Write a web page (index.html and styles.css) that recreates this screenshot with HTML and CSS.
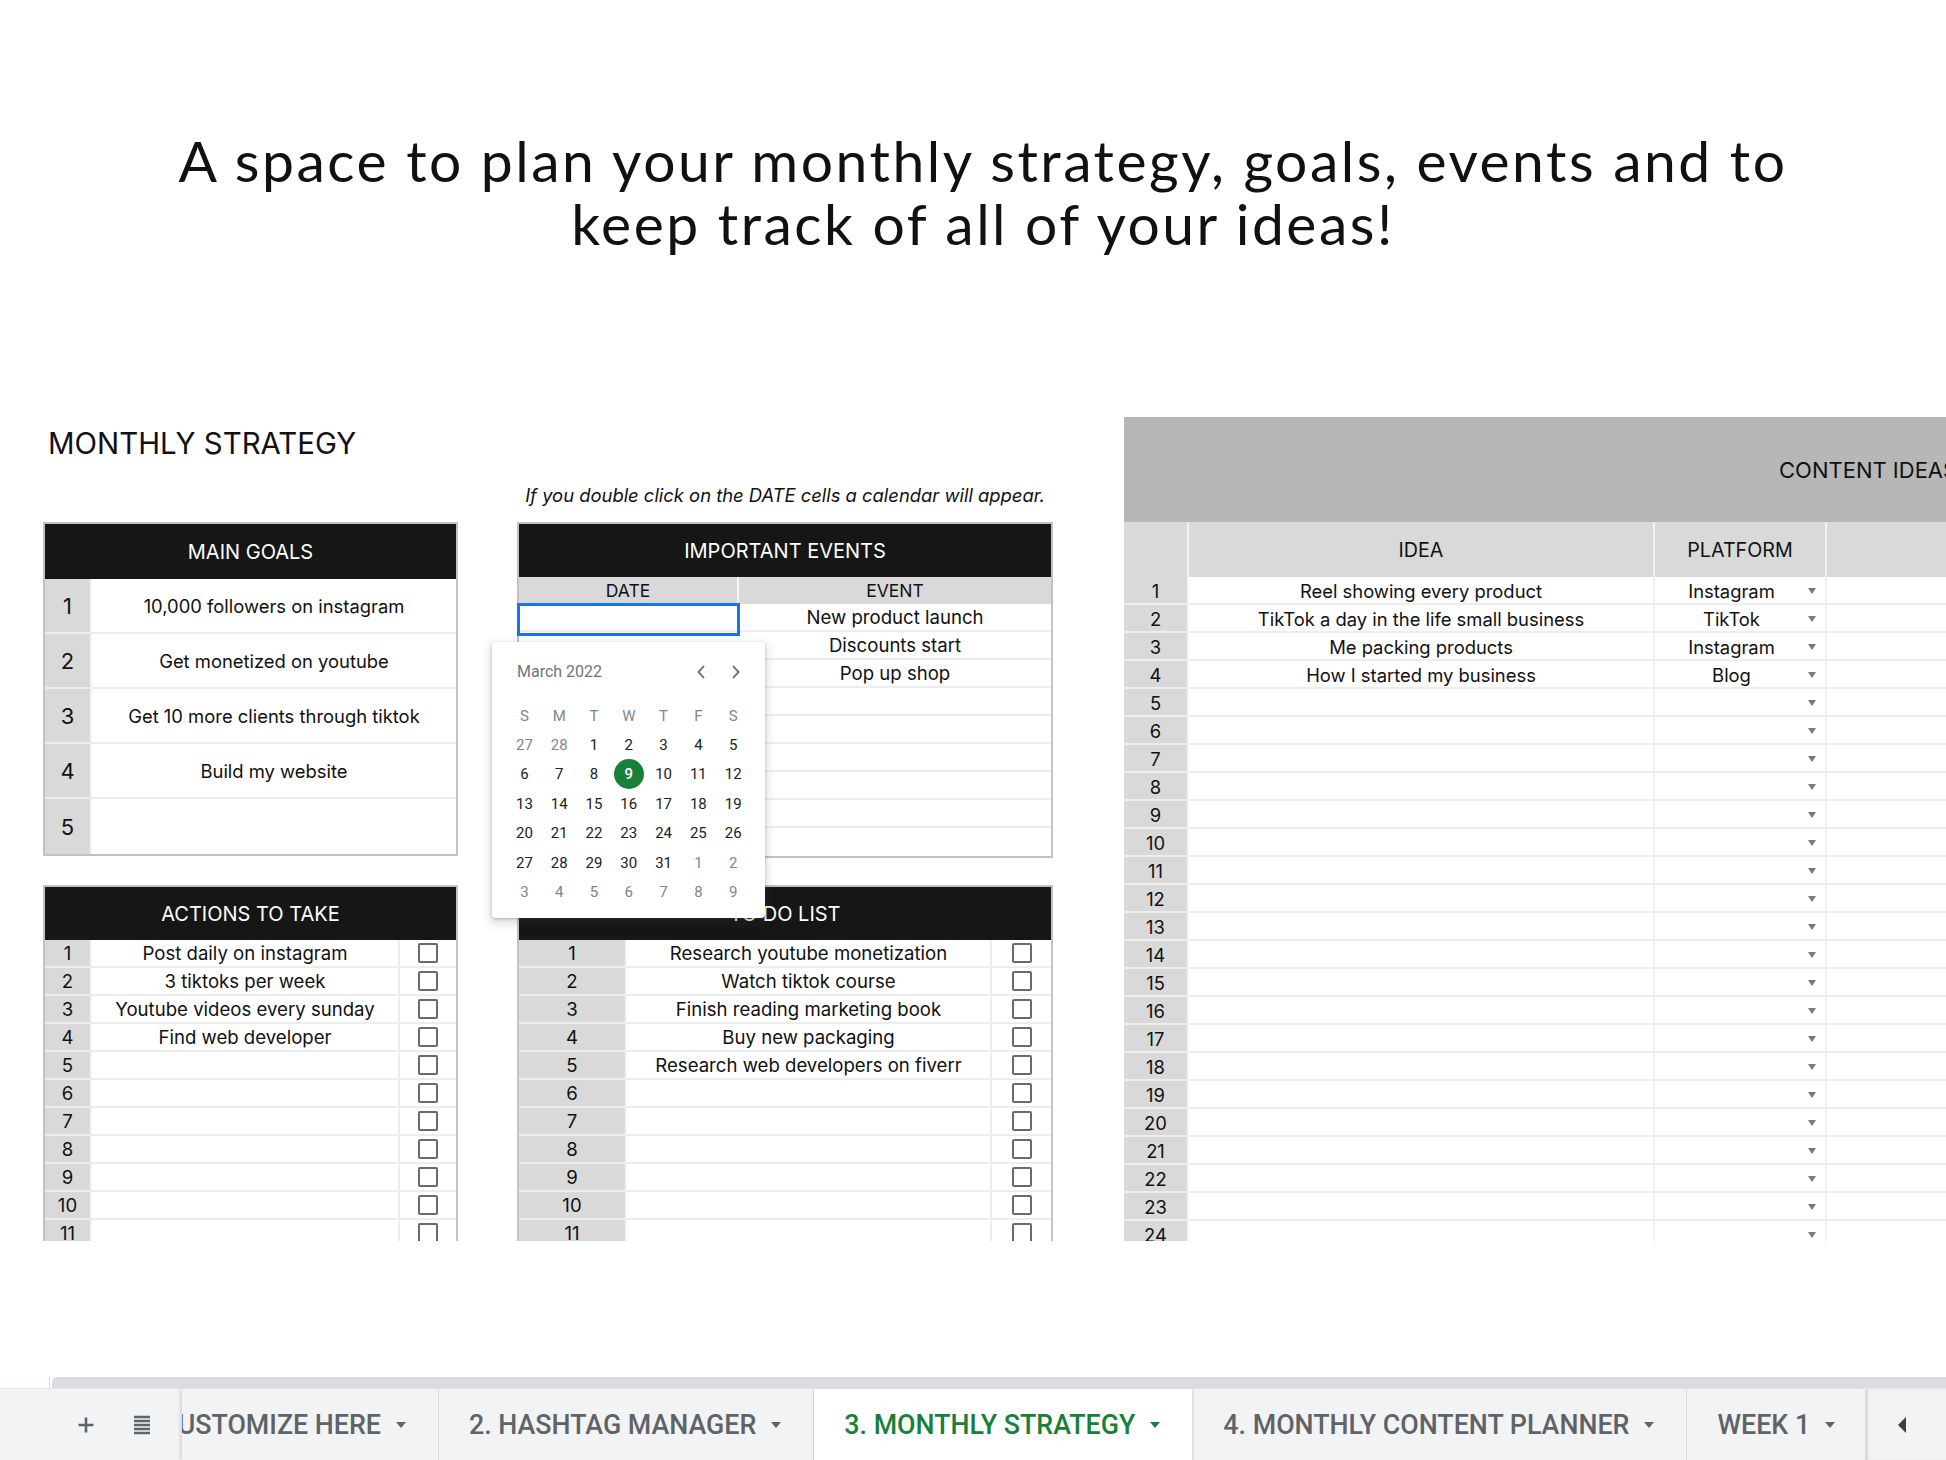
FILE: index.html
```html
<!DOCTYPE html>
<html lang="en">
<head>
<meta charset="utf-8">
<title>Monthly Strategy</title>
<link rel="stylesheet" href="styles.css">
</head>
<body>
<h1 class="title">A space to plan your monthly strategy, goals, events and to<br>keep track of all of your ideas!</h1>

<main class="main">
  <section class="col-left">
    <h2 class="strategy-head">MONTHLY STRATEGY</h2>

    <div class="tbl goals">
      <div class="tbl-head">MAIN GOALS</div>
      <div class="row g-row"><span class="num">1</span><span class="txt">10,000 followers on instagram</span></div>
      <div class="row g-row"><span class="num">2</span><span class="txt">Get monetized on youtube</span></div>
      <div class="row g-row"><span class="num">3</span><span class="txt">Get 10 more clients through tiktok</span></div>
      <div class="row g-row"><span class="num">4</span><span class="txt">Build my website</span></div>
      <div class="row g-row"><span class="num">5</span><span class="txt"></span></div>
    </div>

    <div class="tbl actions">
      <div class="tbl-head">ACTIONS TO TAKE</div>
      <div class="row a-row"><span class="num">1</span><span class="txt">Post daily on instagram</span><span class="chk"><i class="box"></i></span></div>
      <div class="row a-row"><span class="num">2</span><span class="txt">3 tiktoks per week</span><span class="chk"><i class="box"></i></span></div>
      <div class="row a-row"><span class="num">3</span><span class="txt">Youtube videos every sunday</span><span class="chk"><i class="box"></i></span></div>
      <div class="row a-row"><span class="num">4</span><span class="txt">Find web developer</span><span class="chk"><i class="box"></i></span></div>
      <div class="row a-row"><span class="num">5</span><span class="txt"></span><span class="chk"><i class="box"></i></span></div>
      <div class="row a-row"><span class="num">6</span><span class="txt"></span><span class="chk"><i class="box"></i></span></div>
      <div class="row a-row"><span class="num">7</span><span class="txt"></span><span class="chk"><i class="box"></i></span></div>
      <div class="row a-row"><span class="num">8</span><span class="txt"></span><span class="chk"><i class="box"></i></span></div>
      <div class="row a-row"><span class="num">9</span><span class="txt"></span><span class="chk"><i class="box"></i></span></div>
      <div class="row a-row"><span class="num">10</span><span class="txt"></span><span class="chk"><i class="box"></i></span></div>
      <div class="row a-row"><span class="num">11</span><span class="txt"></span><span class="chk"><i class="box"></i></span></div>
    </div>
  </section>

  <section class="col-mid">
    <p class="instr">If you double click on the DATE cells a calendar will appear.</p>

    <div class="tbl events">
      <div class="tbl-head">IMPORTANT EVENTS</div>
      <div class="e-sub"><span>DATE</span><span>EVENT</span></div>
      <div class="row e-row"><span class="date selected"></span><span class="txt">New product launch</span></div>
      <div class="row e-row"><span class="date"></span><span class="txt">Discounts start</span></div>
      <div class="row e-row"><span class="date"></span><span class="txt">Pop up shop</span></div>
      <div class="row e-row"><span class="date"></span><span class="txt"></span></div>
      <div class="row e-row"><span class="date"></span><span class="txt"></span></div>
      <div class="row e-row"><span class="date"></span><span class="txt"></span></div>
      <div class="row e-row"><span class="date"></span><span class="txt"></span></div>
      <div class="row e-row"><span class="date"></span><span class="txt"></span></div>
      <div class="row e-row"><span class="date"></span><span class="txt"></span></div>
    </div>

    <div class="tbl todo">
      <div class="tbl-head">TO DO LIST</div>
      <div class="row t-row"><span class="num">1</span><span class="txt">Research youtube monetization</span><span class="chk"><i class="box"></i></span></div>
      <div class="row t-row"><span class="num">2</span><span class="txt">Watch tiktok course</span><span class="chk"><i class="box"></i></span></div>
      <div class="row t-row"><span class="num">3</span><span class="txt">Finish reading marketing book</span><span class="chk"><i class="box"></i></span></div>
      <div class="row t-row"><span class="num">4</span><span class="txt">Buy new packaging</span><span class="chk"><i class="box"></i></span></div>
      <div class="row t-row"><span class="num">5</span><span class="txt">Research web developers on fiverr</span><span class="chk"><i class="box"></i></span></div>
      <div class="row t-row"><span class="num">6</span><span class="txt"></span><span class="chk"><i class="box"></i></span></div>
      <div class="row t-row"><span class="num">7</span><span class="txt"></span><span class="chk"><i class="box"></i></span></div>
      <div class="row t-row"><span class="num">8</span><span class="txt"></span><span class="chk"><i class="box"></i></span></div>
      <div class="row t-row"><span class="num">9</span><span class="txt"></span><span class="chk"><i class="box"></i></span></div>
      <div class="row t-row"><span class="num">10</span><span class="txt"></span><span class="chk"><i class="box"></i></span></div>
      <div class="row t-row"><span class="num">11</span><span class="txt"></span><span class="chk"><i class="box"></i></span></div>
    </div>

    <div class="calendar">
      <div class="cal-head">
        <span class="cal-month">March 2022</span>
        <span class="cal-nav">
          <svg width="10" height="16" viewBox="0 0 10 16"><path d="M8 2 L2.5 8 L8 14" fill="none" stroke="#5f6368" stroke-width="1.8"/></svg>
          <svg width="10" height="16" viewBox="0 0 10 16"><path d="M2 2 L7.5 8 L2 14" fill="none" stroke="#5f6368" stroke-width="1.8"/></svg>
        </span>
      </div>
      <div class="cal-grid">
        <span class="dow">S</span><span class="dow">M</span><span class="dow">T</span><span class="dow">W</span><span class="dow">T</span><span class="dow">F</span><span class="dow">S</span>
        <span class="out">27</span><span class="out">28</span><span>1</span><span>2</span><span>3</span><span>4</span><span>5</span>
        <span>6</span><span>7</span><span>8</span><span><b class="today">9</b></span><span>10</span><span>11</span><span>12</span>
        <span>13</span><span>14</span><span>15</span><span>16</span><span>17</span><span>18</span><span>19</span>
        <span>20</span><span>21</span><span>22</span><span>23</span><span>24</span><span>25</span><span>26</span>
        <span>27</span><span>28</span><span>29</span><span>30</span><span>31</span><span class="out">1</span><span class="out">2</span>
        <span class="out">3</span><span class="out">4</span><span class="out">5</span><span class="out">6</span><span class="out">7</span><span class="out">8</span><span class="out">9</span>
      </div>
    </div>
  </section>

  <section class="col-right">
    <div class="ci-title">CONTENT IDEAS</div>
    <div class="ci-head"><span></span><span>IDEA</span><span>PLATFORM</span><span></span></div>
    <div class="ci-row"><span class="num">1</span><span class="txt">Reel showing every product</span><span class="plat"><span class="pt">Instagram</span><i class="dd"></i></span><span></span></div>
    <div class="ci-row"><span class="num">2</span><span class="txt">TikTok a day in the life small business</span><span class="plat"><span class="pt">TikTok</span><i class="dd"></i></span><span></span></div>
    <div class="ci-row"><span class="num">3</span><span class="txt">Me packing products</span><span class="plat"><span class="pt">Instagram</span><i class="dd"></i></span><span></span></div>
    <div class="ci-row"><span class="num">4</span><span class="txt">How I started my business</span><span class="plat"><span class="pt">Blog</span><i class="dd"></i></span><span></span></div>
    <div class="ci-row"><span class="num">5</span><span class="txt"></span><span class="plat"><span class="pt"></span><i class="dd"></i></span><span></span></div>
    <div class="ci-row"><span class="num">6</span><span class="txt"></span><span class="plat"><span class="pt"></span><i class="dd"></i></span><span></span></div>
    <div class="ci-row"><span class="num">7</span><span class="txt"></span><span class="plat"><span class="pt"></span><i class="dd"></i></span><span></span></div>
    <div class="ci-row"><span class="num">8</span><span class="txt"></span><span class="plat"><span class="pt"></span><i class="dd"></i></span><span></span></div>
    <div class="ci-row"><span class="num">9</span><span class="txt"></span><span class="plat"><span class="pt"></span><i class="dd"></i></span><span></span></div>
    <div class="ci-row"><span class="num">10</span><span class="txt"></span><span class="plat"><span class="pt"></span><i class="dd"></i></span><span></span></div>
    <div class="ci-row"><span class="num">11</span><span class="txt"></span><span class="plat"><span class="pt"></span><i class="dd"></i></span><span></span></div>
    <div class="ci-row"><span class="num">12</span><span class="txt"></span><span class="plat"><span class="pt"></span><i class="dd"></i></span><span></span></div>
    <div class="ci-row"><span class="num">13</span><span class="txt"></span><span class="plat"><span class="pt"></span><i class="dd"></i></span><span></span></div>
    <div class="ci-row"><span class="num">14</span><span class="txt"></span><span class="plat"><span class="pt"></span><i class="dd"></i></span><span></span></div>
    <div class="ci-row"><span class="num">15</span><span class="txt"></span><span class="plat"><span class="pt"></span><i class="dd"></i></span><span></span></div>
    <div class="ci-row"><span class="num">16</span><span class="txt"></span><span class="plat"><span class="pt"></span><i class="dd"></i></span><span></span></div>
    <div class="ci-row"><span class="num">17</span><span class="txt"></span><span class="plat"><span class="pt"></span><i class="dd"></i></span><span></span></div>
    <div class="ci-row"><span class="num">18</span><span class="txt"></span><span class="plat"><span class="pt"></span><i class="dd"></i></span><span></span></div>
    <div class="ci-row"><span class="num">19</span><span class="txt"></span><span class="plat"><span class="pt"></span><i class="dd"></i></span><span></span></div>
    <div class="ci-row"><span class="num">20</span><span class="txt"></span><span class="plat"><span class="pt"></span><i class="dd"></i></span><span></span></div>
    <div class="ci-row"><span class="num">21</span><span class="txt"></span><span class="plat"><span class="pt"></span><i class="dd"></i></span><span></span></div>
    <div class="ci-row"><span class="num">22</span><span class="txt"></span><span class="plat"><span class="pt"></span><i class="dd"></i></span><span></span></div>
    <div class="ci-row"><span class="num">23</span><span class="txt"></span><span class="plat"><span class="pt"></span><i class="dd"></i></span><span></span></div>
    <div class="ci-row"><span class="num">24</span><span class="txt"></span><span class="plat"><span class="pt"></span><i class="dd"></i></span><span></span></div>
  </section>
</main>

<div class="spacer"></div>

<footer class="sheetbar">
  <div class="scroll-row"><span class="scroll-left"></span><span class="scroll-track"></span></div>
  <div class="tabbar">
    <div class="tools">
      <svg class="ic-plus" width="18" height="18" viewBox="0 0 18 18"><path d="M9 1.5 V16.5 M1.5 9 H16.5" stroke="#5f6368" stroke-width="2.6"/></svg>
      <svg class="ic-list" width="18" height="20" viewBox="0 0 18 20"><path d="M1 2 H17 M1 6 H17 M1 10 H17 M1 14 H17 M1 18 H17" stroke="#5f6368" stroke-width="2.4"/></svg>
    </div>
    <div class="tabs">
      <div class="tab-clip"><div class="tab">1. CUSTOMIZE HERE<i class="tarr"></i></div></div>
      <div class="tab">2. HASHTAG MANAGER<i class="tarr"></i></div>
      <div class="tab active">3. MONTHLY STRATEGY<i class="tarr"></i></div>
      <div class="tab">4. MONTHLY CONTENT PLANNER<i class="tarr"></i></div>
      <div class="tab">WEEK 1<i class="tarr"></i></div>
    </div>
    <div class="tab-nav">
      <svg width="10" height="18" viewBox="0 0 10 18"><path d="M9 1 L1 9 L9 17 Z" fill="#3c4043"/></svg>
    </div>
  </div>
</footer>
</body>
</html>
```

FILE: styles.css
```css
:root {
  --f: "Inter", "Noto Sans", "Liberation Sans", sans-serif;
  --num: #d9d9d9;
  --line: #ededed;
}

* { box-sizing: border-box; }

body {
  margin: 0;
  width: 1946px;
  height: 1460px;
  overflow: hidden;
  background: #fff;
  color: #111;
  font-family: var(--f);
  display: flex;
  flex-direction: column;
}

.title {
  margin: 0;
  height: 417px;
  flex: none;
  padding: 129px 0 0 20px;
  text-align: center;
  font-family: "Lato", "Liberation Sans", sans-serif;
  font-weight: 400;
  font-size: 57px;
  line-height: 63px;
  letter-spacing: 2.5px;
  color: #111;
}

.main {
  flex: none;
  height: 824px;
  overflow: hidden;
  display: flex;
  padding-left: 43px;
}

.col-left { width: 415px; flex: none; }
.col-mid { width: 536px; flex: none; margin-left: 59px; position: relative; }
.col-right { width: 900px; flex: none; margin-left: 71px; }

.strategy-head {
  margin: 0;
  height: 105px;
  padding: 7px 0 0 5px;
  font-weight: 400;
  font-size: 29.4px;
  line-height: 40px;
  color: #111;
}

.instr {
  margin: 0;
  height: 105px;
  padding: 66px 0 0 0;
  text-align: center;
  font-style: italic;
  font-size: 18.4px;
  line-height: 24px;
  color: #111;
  white-space: nowrap;
}

/* tables */
.tbl {
  border: 2px solid #c2c2c2;
  background: #fff;
}
.tbl-head {
  height: 53px;
  background: #161616;
  color: #fff;
  display: flex;
  align-items: center;
  justify-content: center;
  font-size: 20px;
}
.goals .tbl-head { height: 55px; }

.row {
  display: grid;
  height: 28px;
  border-bottom: 2px solid var(--line);
  font-size: 18.6px;
  color: #111;
}
.row > span {
  display: flex;
  align-items: center;
  justify-content: center;
  white-space: nowrap;
}
.num {
  background: var(--num);
  border-right: 2px solid #f4f4f4;
}
.chk { border-left: 2px solid var(--line); }
.box {
  width: 20px;
  height: 20px;
  border: 2px solid #6a6a6a;
  border-radius: 2px;
}

.g-row { grid-template-columns: 47px 1fr; height: 55px; font-size: 18.4px; }
.g-row:last-child { border-bottom: 0; }
.g-row .num { font-size: 22px; }

.actions { margin-top: 29px; }
.a-row { grid-template-columns: 47px 1fr 58px; }

.todo { margin-top: 27px; }
.t-row { grid-template-columns: 108px 1fr 61px; }

.e-sub {
  display: grid;
  grid-template-columns: 220px 1fr;
  height: 27px;
  background: var(--num);
  font-size: 17.5px;
}
.e-sub span {
  display: flex;
  align-items: center;
  justify-content: center;
}
.e-sub span:first-child { border-right: 2px solid #f4f4f4; }
.e-row { grid-template-columns: 220px 1fr; }
.e-row:last-child { border-bottom: 0; }
.date { position: relative; }
.selected::after {
  content: "";
  position: absolute;
  left: -2px;
  right: -1px;
  top: -1px;
  bottom: -6px;
  border: 3px solid #1a73e8;
}

/* calendar popup */
.calendar {
  position: absolute;
  left: -25px;
  top: 225px;
  width: 273px;
  height: 276px;
  background: #fff;
  border-radius: 4px;
  box-shadow: 0 1px 3px rgba(60,64,67,.3), 0 4px 8px 3px rgba(60,64,67,.15);
  font-family: "Roboto", "Liberation Sans", sans-serif;
  z-index: 5;
}
.cal-head {
  height: 59px;
  display: flex;
  align-items: center;
  justify-content: space-between;
  padding: 0 24px 0 25px;
}
.cal-month { font-size: 16px; color: #70757a; }
.cal-nav { display: flex; gap: 25px; }
.cal-grid {
  display: grid;
  grid-template-columns: repeat(7, 34.8px);
  grid-auto-rows: 29.4px;
  padding-left: 15px;
  font-size: 15px;
  color: #202124;
}
.cal-grid span {
  display: flex;
  align-items: center;
  justify-content: center;
}
.cal-grid .dow, .cal-grid .out { color: #80868b; }
.today {
  width: 30px;
  height: 30px;
  border-radius: 50%;
  background: #188038;
  color: #fff;
  font-weight: 500;
  display: flex;
  align-items: center;
  justify-content: center;
}

/* content ideas */
.ci-title {
  height: 105px;
  background: #b7b7b7;
  display: flex;
  align-items: center;
  padding-left: 655px;
  font-size: 22px;
  white-space: nowrap;
  color: #111;
}
.ci-head, .ci-row {
  display: grid;
  grid-template-columns: 65px 466px 172px 1fr;
}
.ci-head {
  height: 55px;
  background: var(--num);
  font-size: 19.7px;
}
.ci-head span {
  display: flex;
  align-items: center;
  justify-content: center;
  border-right: 2px solid #f2f2f2;
}
.ci-row {
  height: 28px;
  border-bottom: 2px solid var(--line);
  font-size: 18.4px;
}
.ci-row > span {
  display: flex;
  align-items: center;
  justify-content: center;
  white-space: nowrap;
  padding-top: 1px;
}
.ci-row > span:nth-child(2), .ci-row > span:nth-child(3) { border-right: 2px solid #f0f0f0; }
.plat { padding-right: 9px; }
.pt { flex: 1; text-align: center; }
.dd {
  width: 0;
  height: 0;
  border-left: 4.5px solid transparent;
  border-right: 4.5px solid transparent;
  border-top: 6px solid #7a7a7a;
}

.spacer { flex: 1; }

/* sheet bar */
.sheetbar { flex: none; }
.scroll-row {
  display: flex;
  height: 11px;
}
.scroll-left {
  width: 50px;
  background: #fff;
  border-right: 1px solid #dadce0;
}
.scroll-track {
  flex: 1;
  margin-left: 2px;
  background: #dadce0;
  border-radius: 5px 0 0 0;
}
.tabbar {
  height: 72px;
  background: #f1f3f4;
  border-top: 1px solid #e3e5e8;
  display: flex;
  font-family: "Roboto", "Liberation Sans", sans-serif;
}
.tools {
  width: 182px;
  flex: none;
  display: flex;
  align-items: center;
  padding-left: 77px;
  gap: 38px;
}
.tabs {
  display: flex;
  flex: none;
  width: 1683px;
  box-shadow: -3px 0 3px -1px rgba(0,0,0,.12);
  position: relative;
}
.tab {
  flex: none;
  display: flex;
  align-items: center;
  padding: 0 32px 0 30px;
  font-size: 26.8px;
  font-weight: 500;
  color: #5f6368;
  white-space: nowrap;
  border-right: 1px solid #dadce0;
}
.tab-clip {
  width: 257px;
  flex: none;
  overflow: hidden;
  display: flex;
  justify-content: flex-end;
}
.tab.active {
  background: #fff;
  color: #188038;
  box-shadow: 0 1px 3px rgba(60,64,67,.15);
}
.tarr {
  margin-left: 15px;
  width: 0;
  height: 0;
  border-left: 5px solid transparent;
  border-right: 5px solid transparent;
  border-top: 6px solid #5f6368;
}
.tab.active .tarr { border-top-color: #188038; }
.tab-nav {
  flex: 1;
  display: flex;
  align-items: center;
  padding-left: 32px;
  box-shadow: inset 3px 0 3px -1px rgba(0,0,0,.12);
}
```
